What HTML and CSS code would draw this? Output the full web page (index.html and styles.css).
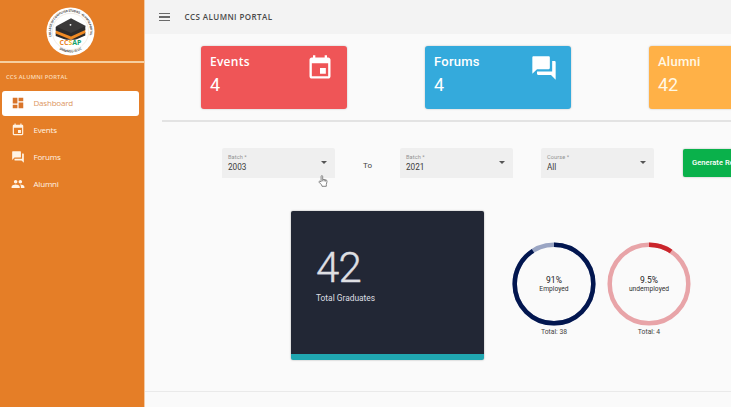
FILE: index.html
```html
<!DOCTYPE html>
<html lang="en">
<head>
<meta charset="utf-8">
<title>CCS Alumni Portal</title>
<link rel="stylesheet" href="styles.css">
</head>
<body>
<svg class="defs" aria-hidden="true">
  <symbol id="event" viewBox="0 0 24 24"><path d="M17 12h-5v5h5v-5zM16 1v2H8V1H6v2H5c-1.1 0-2 .9-2 2v14c0 1.100.9 2 2 2h14c1.100 0 2-.9 2-2V5c0-1.100-.9-2-2-2h-1V1h-2zm3 18H5V8h14v11z"/></symbol>
  <symbol id="forum" viewBox="0 0 24 24"><path d="M21 6h-2v9H6v2c0 .55.45 1 1 1h11l4 4V7c0-.55-.45-1-1-1zm-4 6V3c0-.55-.45-1-1-1H3c-.55 0-1 .45-1 1v14l4-4h10c.55 0 1-.45 1-1z"/></symbol>
  <symbol id="people" viewBox="0 0 24 24"><path d="M16 11c1.660 0 2.990-1.340 2.990-3S17.660 5 16 5s-3 1.340-3 3 1.340 3 3 3zm-8 0c1.660 0 2.990-1.340 2.990-3S9.660 5 8 5 5 6.340 5 8s1.340 3 3 3zm0 2c-2.330 0-7 1.170-7 3.500V19h14v-2.500c0-2.330-4.670-3.500-7-3.500zm8 0c-.29 0-.62.020-.97.050 1.160.84 1.970 1.970 1.970 3.450V19h6v-2.500c0-2.330-4.670-3.500-7-3.500z"/></symbol>
  <symbol id="dash" viewBox="0 0 24 24"><path d="M3 13h8V3H3v10zm0 8h8v-6H3v6zm10 0h8V11h-8v10zm0-18v6h8V3h-8z"/></symbol>
</svg>
<div class="app">
  <aside class="sidebar">
    <div class="brand">
      <svg class="logo" viewBox="0 0 48 48">
        <defs>
          <path id="arc-top" d="M5.500 29A19.200 19.200 0 1 1 42.500 29"/>
          <path id="arc-bottom" d="M8.500 37.500A20.700 20.700 0 0 0 39.500 37.500"/>
        </defs>
        <circle cx="24" cy="24" r="23.500" fill="#fff"/>
        <circle cx="24" cy="24" r="17.800" fill="none" stroke="#e8d9ca" stroke-width=".5"/>
        <text class="seal"><textPath href="#arc-top" textLength="69">COLLEGE OF COMPUTER STUDIES · ALUMNI PORTAL</textPath></text>
        <text class="seal"><textPath href="#arc-bottom" startOffset="50%" text-anchor="middle">DMMMSU-SLUC</textPath></text>
        <path fill="#2d2b2b" d="M9.500 25v3.500l15 5.500 14-6v-3.500l-14 5z"/>
        <path fill="#f08a24" d="M9.500 22.500v3.500l15 6 14-6.500V22l-14 6z"/>
        <path fill="#2d2b2b" d="M9.500 19.500v3.500l15 6 14-6.500v-4z"/>
        <path fill="#3b3939" d="M24.500 11 39 18.500l-14.500 7-15-6.500z"/>
        <circle cx="24" cy="17.500" r=".9" fill="#fff"/>
        <path fill="#fff" d="M12 32h25L35 38H14z"/>
        <text class="abbr" x="13.300" y="37"><tspan fill="#e88329">CC</tspan><tspan fill="#f2b826">S</tspan><tspan fill="#12a169">AP</tspan></text>
      </svg>
    </div>
    <p class="side-title">CCS ALUMNI PORTAL</p>
    <nav>
      <a class="item active"><svg><use href="#dash"/></svg><span>Dashboard</span></a>
      <a class="item"><svg><use href="#event"/></svg><span>Events</span></a>
      <a class="item"><svg><use href="#forum"/></svg><span>Forums</span></a>
      <a class="item"><svg><use href="#people"/></svg><span>Alumni</span></a>
    </nav>
  </aside>
  <main>
    <header>
      <div class="burger"><i></i><i></i><i></i></div>
      <h1>CCS ALUMNI PORTAL</h1>
    </header>
    <section class="cards">
      <div class="card red"><div><h2 class="wide">Events</h2><b>4</b></div><svg><use href="#event"/></svg></div>
      <div class="card blue"><div><h2>Forums</h2><b>4</b></div><svg><use href="#forum"/></svg></div>
      <div class="card amber"><div><h2>Alumni</h2><b>42</b></div><svg><use href="#people"/></svg></div>
    </section>
    <hr>
    <section class="filters">
      <div class="select"><div><label>Batch *</label><span>2003</span></div><i></i>
        <svg class="pointer" viewBox="0 0 10 12"><path d="M3.100 6.800V1.600Q3.100.6 3.900.6T4.700 1.600V4.300L8.200 5Q9.200 5.300 9 6.500L8.300 9.600V11.300H4L3.600 9.900 1 7.200Q.7 6.300 1.600 6.200Z"/><path d="M4.700 4.300v2M6.200 4.600v1.800M7.700 5v1.600"/></svg>
      </div>
      <span class="to">To</span>
      <div class="select"><div><label>Batch *</label><span>2021</span></div><i></i></div>
      <div class="select course"><div><label>Course *</label><span>All</span></div><i></i></div>
      <button>Generate Report</button>
    </section>
    <section class="stats">
      <div class="total"><strong>42</strong><span>Total Graduates</span></div>
      <figure>
        <div class="ring">
          <svg viewBox="0 0 84 84"><circle cx="42" cy="42" r="39.300" stroke="#9aa5c3"/><circle cx="42" cy="42" r="39.300" stroke="#02164f" pathLength="100" stroke-dasharray="91 9"/></svg>
          <div><b>91%</b><span>Employed</span></div>
        </div>
        <figcaption>Total: 38</figcaption>
      </figure>
      <figure>
        <div class="ring">
          <svg viewBox="0 0 84 84"><circle cx="42" cy="42" r="39.300" stroke="#e8a4a8"/><circle cx="42" cy="42" r="39.300" stroke="#ca252b" pathLength="100" stroke-dasharray="9.500 90.500"/></svg>
          <div><b>9.5%</b><span>undemployed</span></div>
        </div>
        <figcaption>Total: 4</figcaption>
      </figure>
    </section>
    <footer></footer>
  </main>
</div>
</body>
</html>
```
FILE: styles.css
```css
* { box-sizing: border-box; }
body { margin: 0; overflow: hidden; background: #fafafa; color: #444; font-family: Roboto, sans-serif; }
h1, h2, p, figure { margin: 0; }
svg { fill: currentColor; display: block; }
.defs { position: absolute; width: 0; height: 0; }
.app { display: flex; width: 731px; height: 407px; overflow: hidden; }

.sidebar { flex: none; width: 145px; background: #e57e27; border-right: 1px solid #f3c9a3; color: #fff3e4; }
.brand { height: 63px; padding: 7px 0 0 46px; border-bottom: 2px solid #f6cf9f; }
.logo { width: 49px; height: 49px; }
.seal { font: 700 3px "Open Sans", sans-serif; fill: #4b4642; }
.abbr { font: 700 6.800px "Open Sans", sans-serif; }
.side-title { height: 28px; padding: 0 0 0 6px; font: 600 5.800px/28px "Open Sans", sans-serif; letter-spacing: .2px; color: #fbdcb9; }
nav { display: flex; flex-direction: column; gap: 2px; padding-left: 2px; }
.item { display: flex; align-items: center; width: 137px; height: 25px; padding: 0 0 1px 9px; border-radius: 3px; font: 400 8px "Open Sans", sans-serif; letter-spacing: -.2px; }
.item svg { width: 14px; height: 14px; margin-right: 8.500px; }
.item span { padding-bottom: 2px; }
.active { background: #fff; color: #d9752b; }
.active span { color: #dc9661; }

main { flex: none; width: 586px; overflow: hidden; }
header { display: flex; align-items: center; height: 34px; padding-left: 14px; background: #f3f3f3; }
.burger { display: grid; gap: 2px; width: 11px; }
.burger i { height: 1.500px; background: #6a6a6a; }
h1 { margin: -2px 0 0 14.500px; font: 600 8px "Open Sans", sans-serif; letter-spacing: .42px; color: #4a4a4a; }
.cards { display: flex; gap: 78px; padding: 12px 0 0 56px; }
.card { display: flex; flex: none; justify-content: space-between; width: 146px; height: 63px; padding: 8px 13px 0 9px; border-radius: 3px; color: #fff; box-shadow: 0 0 2px rgba(0,0,0,.25); }
.card h2 { font: 500 13px/15px Roboto, sans-serif; letter-spacing: .25px; }
.card .wide { font: 600 12px/15px "Open Sans", sans-serif; }
.card b { display: block; margin-top: 5px; font: 400 18px/22px Roboto, sans-serif; }
.card svg { width: 28px; height: 28px; }
.red { background: #ef5557; }
.blue { background: #34aadc; }
.amber { background: #ffb147; color: #fff8e5; }
hr { height: 2px; margin: 11px 0 0 17px; border: 0; background: #e3e3e3; }

.filters { display: flex; align-items: center; height: 30px; margin: 26px 0 0 77px; }
.select { position: relative; display: flex; justify-content: space-between; flex: none; width: 113px; height: 30px; padding: 6px 8px 0 6px; border-radius: 2px 2px 0 0; background: #efefef; }
.select label { display: block; font-size: 5.600px; line-height: 7px; color: #929292; letter-spacing: .1px; }
.select span { display: block; font-size: 8.200px; line-height: 12px; color: #3c3c3c; }
.select > i { width: 0; height: 0; margin-top: 7px; border: 3px solid transparent; border-top-color: #555; border-bottom: 0; }
.pointer { position: absolute; left: 96px; top: 27px; width: 10px; height: 12px; fill: #fff; stroke: #777; stroke-width: .9; }
.to { flex: none; width: 65px; padding-top: 4px; text-align: center; font-size: 8px; font-weight: 400; }
.course { margin-left: 28px; }
button { flex: none; width: 90px; height: 28px; margin: 0 0 1px 29px; padding: 0 0 0 9px; border: 0; border-radius: 2px; background: #0ab14b; color: #fff; font: 500 7.500px Roboto, sans-serif; letter-spacing: .08px; text-align: left; white-space: nowrap; box-shadow: 0 0 2px rgba(0,0,0,.3); }

.stats { display: flex; align-items: flex-start; margin: 33px 0 0 146px; }
.total { display: flex; flex: none; flex-direction: column; width: 193px; height: 149px; padding: 34px 0 0 25px; border-bottom: 6px solid #20a7b1; border-radius: 2px; background: #222735; color: #dedfe2; box-shadow: 0 0 2px rgba(0,0,0,.35); }
.total strong { font-size: 42px; font-weight: 300; line-height: 45px; letter-spacing: -.8px; -webkit-text-stroke: .4px #dedfe2; }
.total span { margin-top: 3px; font-size: 8.400px; line-height: 11px; }
figure { flex: none; width: 84px; margin: 31px 0 0 28px; text-align: center; }
figure + figure { margin-left: 11px; }
.ring { display: grid; width: 84px; height: 84px; place-items: center; }
.ring > * { grid-area: 1 / 1; }
.ring svg { width: 84px; height: 84px; fill: none; stroke-width: 4.500; transform: rotate(-90deg); }
.ring b { display: block; margin-top: -1px; font-size: 8.500px; font-weight: 400; line-height: 10px; color: #222; }
.ring span { display: block; font-size: 6.700px; line-height: 8px; color: #333; }
figcaption { margin-top: 2px; font-size: 6.800px; line-height: 8px; }
footer { margin-top: 31px; border-top: 1px solid #eaeaea; }
```
